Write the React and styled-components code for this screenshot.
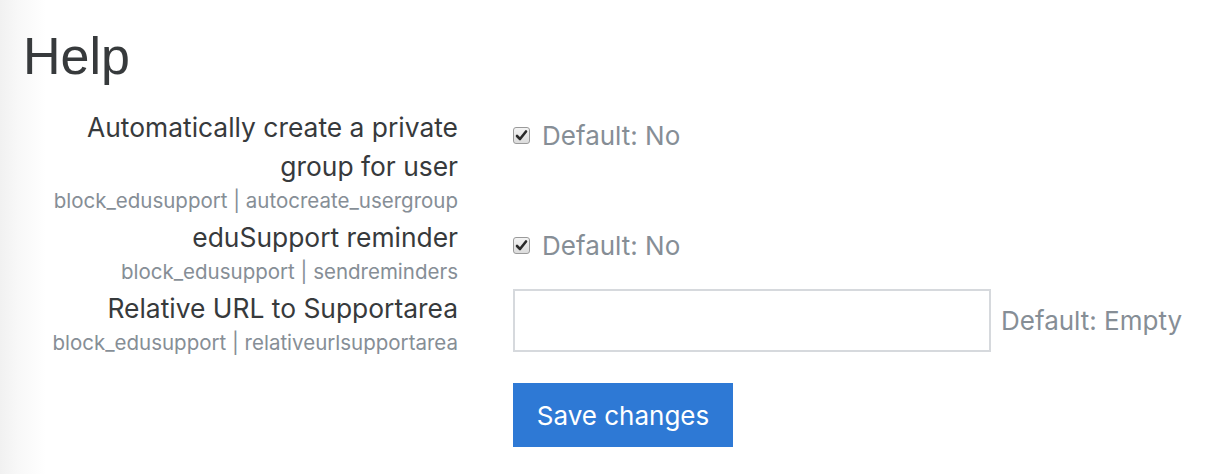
import React from "react";
import styled, { createGlobalStyle } from "styled-components";

const GlobalStyle = createGlobalStyle`
  html, body {
    margin: 0;
    padding: 0;
    background: linear-gradient(to right, #f1f1f1 0, #f8f8f8 18px, #fff 46px);
    min-height: 100%;
  }
  body {
    font-family: Inter, "Helvetica Neue", "Liberation Sans", Arial, sans-serif;
    color: #373a3c;
  }
`;

const Page = styled.div`
  padding: 24px 0 0 23px;
  height: 474px;
  box-sizing: border-box;
`;

const Heading = styled.h2`
  margin: 0 0 19px;
  font-family: "Liberation Sans", "Helvetica Neue", Arial, sans-serif;
  font-size: 52px;
  font-weight: 400;
  line-height: 65px;
  color: #373a3c;
`;

const Form = styled.form`
  display: flex;
  flex-direction: column;
  gap: 3px;
`;

const Row = styled.div`
  display: grid;
  grid-template-columns: 435px 1fr;
  column-gap: 55px;
`;

const LabelCol = styled.div`
  text-align: right;
`;

const Label = styled.label`
  display: block;
  font-size: 26.4px;
  line-height: 39px;
  color: #373a3c;
`;

const SettingName = styled.div`
  font-size: 20.5px;
  line-height: 29px;
  color: #868e96;
`;

const Control = styled.div`
  display: flex;
  align-items: center;
  gap: ${(p) => (p.$tight ? "10px" : "12px")};
  padding-top: ${(p) => (p.$offset ? "8px" : "0")};
  height: ${(p) => (p.$offset ? "39px" : "auto")};
  align-self: start;
`;

const Box = styled.span`
  display: inline-flex;
  align-items: center;
  justify-content: center;
  width: 17px;
  height: 17px;
  box-sizing: border-box;
  border: 1px solid #9a9a9a;
  border-radius: 3px;
  background: linear-gradient(#f4f4f4, #dcdcdc);
`;

const Hint = styled.span`
  font-size: 26px;
  color: #868e96;
  white-space: nowrap;
`;

const TextInput = styled.input`
  width: 478px;
  height: 63px;
  box-sizing: border-box;
  border: 2px solid #d6d9dd;
  border-radius: 0;
  background: #fff;
  padding: 0 14px;
  font-size: 24px;
  outline: none;
`;

const Actions = styled.div`
  padding: 23px 0 0 490px;
`;

const Button = styled.button`
  width: 220px;
  height: 64px;
  border: none;
  border-radius: 0;
  background: #2e79d5;
  color: #fff;
  font-family: Inter, "Helvetica Neue", "Liberation Sans", Arial, sans-serif;
  font-size: 26px;
  cursor: pointer;
`;

const Check = () => (
  <Box>
    <svg width="13" height="13" viewBox="0 0 13 13">
      <path
        d="M2 7 L5 10 L11 2.5"
        fill="none"
        stroke="#2b2b2b"
        strokeWidth="2.6"
        strokeLinecap="round"
        strokeLinejoin="round"
      />
    </svg>
  </Box>
);

const settings = [
  {
    label: ["Automatically create a private", "group for user"],
    name: "block_edusupport | autocreate_usergroup",
    type: "checkbox",
  },
  {
    label: ["eduSupport reminder"],
    name: "block_edusupport | sendreminders",
    type: "checkbox",
  },
  {
    label: ["Relative URL to Supportarea"],
    name: "block_edusupport | relativeurlsupportarea",
    type: "text",
  },
];

const App = () => {
  return (
    <>
      <GlobalStyle />
      <Page>
        <Heading>Help</Heading>
        <Form onSubmit={(e) => e.preventDefault()}>
          {settings.map((s) => (
            <Row key={s.name}>
              <LabelCol>
                {s.label.map((line) => (
                  <Label key={line}>{line}</Label>
                ))}
                <SettingName>{s.name}</SettingName>
              </LabelCol>
              {s.type === "checkbox" ? (
                <Control $offset>
                  <Check />
                  <Hint>Default: No</Hint>
                </Control>
              ) : (
                <Control $tight>
                  <TextInput type="text" />
                  <Hint>Default: Empty</Hint>
                </Control>
              )}
            </Row>
          ))}
          <Actions>
            <Button type="submit">Save changes</Button>
          </Actions>
        </Form>
      </Page>
    </>
  );
};

export default App;
